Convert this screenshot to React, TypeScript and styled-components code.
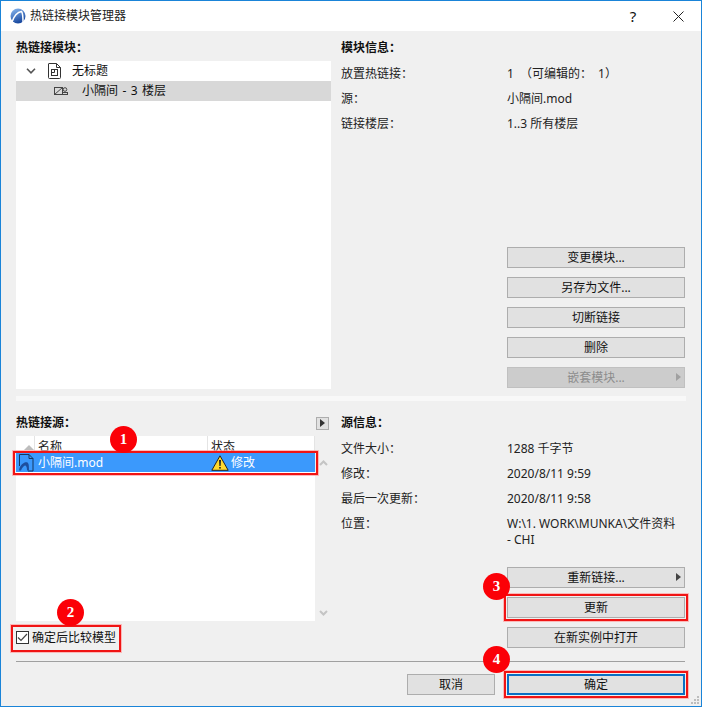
import React from 'react'
import styled, { createGlobalStyle } from 'styled-components'

const GlobalStyle = createGlobalStyle`
   html, body { margin: 0; padding: 0; background: #f0f0f0; }
   * { box-sizing: border-box; }
`

const Window = styled.div`
   position: relative;
   display: flex;
   flex-direction: column;
   width: 702px;
   height: 707px;
   border: 1px solid #1a84d8;
   background: #f0f0f0;
   color: #111;
   font: 12px/16px 'Noto Sans', 'Noto Sans CJK SC', sans-serif;
   overflow: hidden;
`

const TitleBar = styled.div`
   display: flex;
   align-items: center;
   flex: none;
   height: 30px;
   padding: 0 0 0 9px;
   background: #fff;
`

const TitleText = styled.div`
   flex: 1;
   margin-left: 4px;
   color: #222;
`

const TitleButton = styled.div<{ $gap: number }>`
   display: flex;
   align-items: center;
   justify-content: center;
   width: 32px;
   height: 30px;
   margin-right: ${p => p.$gap}px;
   font-size: 15px;
`

const Section = styled.div<{ $height: number; $top: number }>`
   display: grid;
   grid-template-columns: 315px 344px;
   column-gap: 10px;
   flex: none;
   height: ${p => p.$height}px;
   margin-top: ${p => p.$top}px;
   padding-left: 15px;
`

const Column = styled.div`
   display: flex;
   flex-direction: column;
   min-height: 0;
`

const Heading = styled.div`
   flex: none;
   height: 17px;
   line-height: 18px;
   font-weight: 700;
`

const HeadingRow = styled.div`
   display: flex;
   flex: none;
   align-items: center;
   justify-content: space-between;
   height: 17px;
   padding-right: 2px;
`

const TreePanel = styled.div`
   flex: 1;
   margin-top: 5px;
   background: #fff;
`

const TreeRow = styled.div<{ $selected?: boolean; $indent: number }>`
   display: flex;
   align-items: center;
   height: 20px;
   padding-left: ${p => p.$indent}px;
   background: ${p => (p.$selected ? '#d8d8d8' : 'transparent')};
   white-space: pre;
   word-spacing: 1.3px;
`

const TreeChevron = styled.svg`
   width: 10px;
   height: 6px;
   margin-right: 12px;
`

const TreeIcon = styled.svg<{ $gap: number }>`
   flex: none;
   margin-right: ${p => p.$gap}px;
`

const InfoRows = styled.div`
   display: flex;
   flex-direction: column;
   gap: 9px;
   flex: none;
   margin-top: 10px;
`

const InfoRow = styled.div`
   display: grid;
   grid-template-columns: 166px 178px;
`

const InfoKey = styled.div`
   color: #222;
`

const InfoValue = styled.div<{ $wide?: boolean }>`
   color: #222;
   word-spacing: ${p => (p.$wide ? '3px' : '0')};
`

const ButtonStack = styled.div<{ $bottom: number }>`
   display: flex;
   flex-direction: column;
   gap: 9px;
   margin-top: auto;
   margin-bottom: ${p => p.$bottom}px;
   margin-left: 166px;
   width: 178px;
`

const Button = styled.div<{ $disabled?: boolean; $primary?: boolean; $width?: number }>`
   position: relative;
   display: flex;
   align-items: center;
   justify-content: center;
   flex: none;
   width: ${p => (p.$width ? `${p.$width}px` : '100%')};
   height: 21px;
   border: ${p => (p.$primary ? '2px solid #0a6fc4' : `1px solid ${p.$disabled ? '#c0c0c0' : '#adadad'}`)};
   background: ${p => (p.$disabled ? '#cccccc' : '#e1e1e1')};
   color: ${p => (p.$disabled ? '#8c8c8c' : '#111')};
`

const ButtonArrow = styled.span<{ $disabled?: boolean }>`
   position: absolute;
   right: 3px;
   top: 5px;
   width: 0;
   height: 0;
   border-left: 5px solid ${p => (p.$disabled ? '#a0a0a0' : '#444')};
   border-top: 4px solid transparent;
   border-bottom: 4px solid transparent;
`

const SectionDivider = styled.div`
   flex: none;
   width: 670px;
   height: 5px;
   margin: 7px 0 0 15px;
   background: #f8f8f8;
`

const ExpandButton = styled.div`
   display: flex;
   align-items: center;
   justify-content: center;
   width: 13px;
   height: 13px;
   margin-top: 1px;
   border: 1px solid #adadad;
   background: #e1e1e1;

   &::before {
      content: '';
      border-left: 5px solid #333;
      border-top: 4px solid transparent;
      border-bottom: 4px solid transparent;
   }
`

const ListArea = styled.div`
   display: grid;
   grid-template-columns: 299px 16px;
   flex: none;
   height: 185px;
   margin-top: 5px;
`

const ListPanel = styled.div`
   background: #fff;
`

const ListHeader = styled.div`
   display: grid;
   grid-template-columns: 19px 173px 1fr;
   height: 16px;
`

const HeaderCell = styled.div`
   display: flex;
   align-items: center;
   padding: 3px 0 0 3px;
   border-right: 1px solid #e4e4e4;
   color: #222;
`

const SortArrow = styled.span`
   margin-left: 5px;
   border-bottom: 5px solid #bdbdbd;
   border-left: 5px solid transparent;
   border-right: 5px solid transparent;
`

const ListRow = styled.div`
   display: grid;
   grid-template-columns: 22px 173px 1fr;
   align-items: center;
   height: 19px;
   margin-top: 1px;
   background: #3b99fc;
   color: #fff;
`

const RowIconCell = styled.div`
   display: flex;
   padding-left: 2px;
`

const StatusCell = styled.div`
   display: flex;
   align-items: center;
   gap: 2px;
`

const ScrollColumn = styled.div`
   display: flex;
   flex-direction: column;
   align-items: center;
   justify-content: space-between;
   padding: 24px 0 5px;
`

const Marked = styled.div<{ $inset: string }>`
   position: relative;

   &::after {
      content: '';
      position: absolute;
      inset: ${p => p.$inset};
      border: 2px solid #f01414;
      outline: 1px solid rgba(255, 160, 160, 0.7);
      pointer-events: none;
   }
`

const CheckRow = styled.div`
   display: inline-flex;
   align-items: center;
   gap: 3px;
   height: 14px;
`

const CheckRowWrap = styled.div`
   flex: none;
   align-self: flex-start;
   margin-top: 9px;
`

const CheckBox = styled.span`
   display: flex;
   align-items: center;
   justify-content: center;
   width: 13px;
   height: 13px;
   border: 1px solid #333;
   background: #fff;
`

const FootRule = styled.div`
   flex: none;
   width: 669px;
   height: 1px;
   margin: 13px 0 0 15px;
   background: #a0a0a0;
`

const Footer = styled.div`
   display: flex;
   flex: none;
   justify-content: flex-end;
   gap: 12px;
   width: 684px;
   margin-top: 12px;
`

const FooterButton = styled(Marked)`
   flex: none;
   width: 178px;
`

const Badge = styled.div<{ $x: number; $y: number }>`
   position: absolute;
   left: ${p => p.$x - 14}px;
   top: ${p => p.$y - 14}px;
   display: flex;
   align-items: center;
   justify-content: center;
   width: 27px;
   height: 27px;
   border-radius: 50%;
   background: #fb0007;
   color: #fff;
   font: 700 15px/1 'Liberation Serif', serif;
`

const Grip = styled.svg`
   position: absolute;
   right: 1px;
   bottom: 1px;
`

const Logo = () => (
   <svg width="16" height="16" viewBox="0 0 16 16" fill="none">
      <defs>
         <linearGradient id="lg" x1="0" y1="0" x2="0.4" y2="1">
            <stop offset="0" stopColor="#8dbcf2" />
            <stop offset="1" stopColor="#1a4aa0" />
         </linearGradient>
      </defs>
      <circle cx="8" cy="8" r="7.5" fill="url(#lg)" />
      <path d="M2 14C4 8 8 4 11.5 3.5C12.8 5 13 9 13 14" stroke="#fff" strokeWidth="1.5" />
   </svg>
)

const ModuleFileIcon = () => (
   <TreeIcon $gap={11} width="13" height="16" viewBox="0 0 13 16" fill="none" stroke="#333" strokeWidth="1">
      <path d="M1 .5H8.5L12.5 4.5V14.5A1 1 0 0 1 11.5 15.5H1.5A1 1 0 0 1 .5 14.5V1A.5.5 0 0 1 1 .5Z" />
      <path d="M8.5.5V4.5H12.5" />
      <rect x="3.5" y="6.5" width="6" height="6" />
      <path d="M3.5 9.5H6.5V6.5" />
   </TreeIcon>
)

const ModuleInstanceIcon = () => (
   <TreeIcon $gap={14} width="14" height="10" viewBox="0 0 14 10" fill="none" stroke="#444" strokeWidth="1">
      <rect x=".5" y="1.5" width="8" height="7" />
      <path d="M.5 8.5L8.5 1.5" />
      <circle cx="11" cy="3.5" r="1.8" />
      <rect x="9" y="6.5" width="4.5" height="2" />
   </TreeIcon>
)

const ModFileIcon = () => (
   <svg width="16" height="18" viewBox="0 0 16 18" fill="none">
      <path d="M1.5 .5H11L15 4.5V17H10" stroke="#16365f" />
      <path d="M11 .5V4.5H15" stroke="#16365f" />
      <path d="M1 16.5C2 10 7 7.5 9.5 8.5C11 9.5 11 13 11 16.5H9C9 14 8.5 12 7.5 11.5C6 11.5 4 13.5 3 16.5Z" fill="#1d4f9e" />
      <path d="M1.5 .5V12" stroke="#16365f" />
   </svg>
)

const WarningIcon = () => (
   <svg width="18" height="16" viewBox="0 0 18 16">
      <path d="M9 .8L17.2 15.3H.8Z" fill="#ffd92e" stroke="#222" strokeWidth="1" />
      <path d="M8 5H10L9.6 11H8.4Z" fill="#222" />
      <rect x="8.2" y="12" width="1.6" height="1.6" fill="#222" />
   </svg>
)

const Chevron = ({ up }: { up?: boolean }) => (
   <svg width="9" height="6" viewBox="0 0 9 6" fill="none" stroke="#c4c4c4" strokeWidth="2">
      <path d={up ? 'M1 5L4.5 1.5L8 5' : 'M1 1L4.5 4.5L8 1'} />
   </svg>
)

export default function App() {
   return (
      <>
         <GlobalStyle />
         <Window>
            <TitleBar>
               <Logo />
               <TitleText>热链接模块管理器</TitleText>
               <TitleButton $gap={13}>?</TitleButton>
               <TitleButton $gap={7}>
                  <svg width="11" height="11" viewBox="0 0 11 11" stroke="#222" strokeWidth="1">
                     <path d="M.5.5L10.5 10.5M10.5.5L.5 10.5" />
                  </svg>
               </TitleButton>
            </TitleBar>

            <Section $height={350} $top={8}>
               <Column>
                  <Heading>热链接模块：</Heading>
                  <TreePanel>
                     <TreeRow $indent={10}>
                        <TreeChevron viewBox="0 0 10 6" fill="none" stroke="#555" strokeWidth="1.6">
                           <path d="M1 .8L5 4.8L9 .8" />
                        </TreeChevron>
                        <ModuleFileIcon />
                        无标题
                     </TreeRow>
                     <TreeRow $selected $indent={38}>
                        <ModuleInstanceIcon />
                        小隔间 - 3 楼层
                     </TreeRow>
                  </TreePanel>
               </Column>
               <Column>
                  <Heading>模块信息：</Heading>
                  <InfoRows>
                     <InfoRow>
                        <InfoKey>放置热链接：</InfoKey>
                        <InfoValue $wide>1 （可编辑的： 1）</InfoValue>
                     </InfoRow>
                     <InfoRow>
                        <InfoKey>源：</InfoKey>
                        <InfoValue>小隔间.mod</InfoValue>
                     </InfoRow>
                     <InfoRow>
                        <InfoKey>链接楼层：</InfoKey>
                        <InfoValue>1..3 所有楼层</InfoValue>
                     </InfoRow>
                  </InfoRows>
                  <ButtonStack $bottom={1}>
                     <Button>变更模块...</Button>
                     <Button>另存为文件...</Button>
                     <Button>切断链接</Button>
                     <Button>删除</Button>
                     <Button $disabled>
                        嵌套模块...
                        <ButtonArrow $disabled />
                     </Button>
                  </ButtonStack>
               </Column>
            </Section>

            <SectionDivider />

            <Section $height={234} $top={13}>
               <Column>
                  <HeadingRow>
                     <Heading>热链接源：</Heading>
                     <ExpandButton />
                  </HeadingRow>
                  <ListArea>
                     <ListPanel>
                        <ListHeader>
                           <HeaderCell>
                              <SortArrow />
                           </HeaderCell>
                           <HeaderCell>名称</HeaderCell>
                           <HeaderCell>状态</HeaderCell>
                        </ListHeader>
                        <Marked $inset="-2px -3px -3px -3px">
                           <ListRow>
                              <RowIconCell>
                                 <ModFileIcon />
                              </RowIconCell>
                              <div>小隔间.mod</div>
                              <StatusCell>
                                 <WarningIcon />
                                 修改
                              </StatusCell>
                           </ListRow>
                        </Marked>
                     </ListPanel>
                     <ScrollColumn>
                        <Chevron up />
                        <Chevron />
                     </ScrollColumn>
                  </ListArea>
                  <CheckRowWrap>
                     <Marked $inset="-5px -5px -6px -5px">
                        <CheckRow>
                           <CheckBox>
                              <svg width="11" height="9" viewBox="0 0 11 9" fill="none" stroke="#444" strokeWidth="1.2">
                                 <path d="M1 4.5L4 7.5L10 1" />
                              </svg>
                           </CheckBox>
                           确定后比较模型
                        </CheckRow>
                     </Marked>
                  </CheckRowWrap>
               </Column>
               <Column>
                  <Heading>源信息：</Heading>
                  <InfoRows>
                     <InfoRow>
                        <InfoKey>文件大小：</InfoKey>
                        <InfoValue>1288 千字节</InfoValue>
                     </InfoRow>
                     <InfoRow>
                        <InfoKey>修改：</InfoKey>
                        <InfoValue>2020/8/11 9:59</InfoValue>
                     </InfoRow>
                     <InfoRow>
                        <InfoKey>最后一次更新：</InfoKey>
                        <InfoValue>2020/8/11 9:58</InfoValue>
                     </InfoRow>
                     <InfoRow>
                        <InfoKey>位置：</InfoKey>
                        <InfoValue>
                           W:\1. WORK\MUNKA\文件资料
                           <br />- CHI
                        </InfoValue>
                     </InfoRow>
                  </InfoRows>
                  <ButtonStack $bottom={0}>
                     <Button>
                        重新链接...
                        <ButtonArrow />
                     </Button>
                     <Marked $inset="-3px">
                        <Button>更新</Button>
                     </Marked>
                     <Button>在新实例中打开</Button>
                  </ButtonStack>
               </Column>
            </Section>

            <FootRule />

            <Footer>
               <Button $width={88}>取消</Button>
               <FooterButton $inset="-3px">
                  <Button $primary>确定</Button>
               </FooterButton>
            </Footer>

            <Badge $x={123} $y={439}>1</Badge>
            <Badge $x={70} $y={612}>2</Badge>
            <Badge $x={496} $y={586}>3</Badge>
            <Badge $x={496} $y={659}>4</Badge>

            <Grip width="10" height="10" viewBox="0 0 10 10" fill="#bdbdbd">
               <rect x="7" y="1" width="2" height="2" />
               <rect x="4" y="4" width="2" height="2" />
               <rect x="7" y="4" width="2" height="2" />
               <rect x="1" y="7" width="2" height="2" />
               <rect x="4" y="7" width="2" height="2" />
               <rect x="7" y="7" width="2" height="2" />
            </Grip>
         </Window>
      </>
   )
}
